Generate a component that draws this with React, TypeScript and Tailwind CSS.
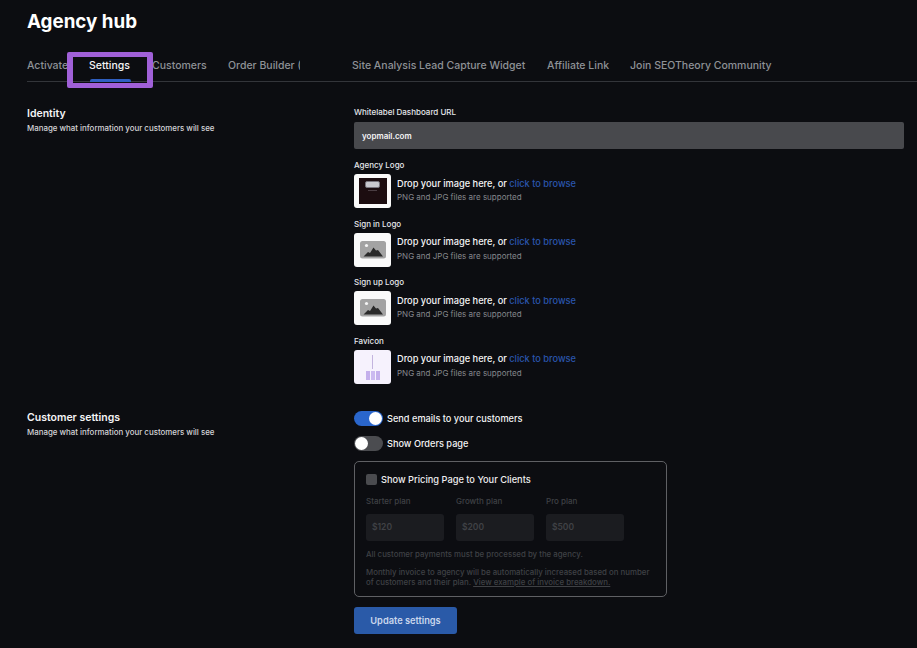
const font = { fontFamily: "Inter, 'Liberation Sans', sans-serif" };

function Placeholder() {
  return (
    <svg viewBox="0 0 37 34" className="w-[37px] h-[34px] block">
      <rect x="6" y="8" width="26" height="17.5" rx="2.5" fill="#a3a3a3" />
      <circle cx="12.5" cy="12.5" r="1.6" fill="#f5f5f5" />
      <path d="M9.5 23.5 L14 19 L16 20 L19.5 14.5 L22 17.5 L24 17 L29 23.5 Z" fill="#2a2a2a" />
    </svg>
  );
}

function AgencyThumb() {
  return (
    <div className="h-full w-full flex items-center justify-center">
      <div className="w-[28px] h-[26px] bg-[#1c0d10] flex flex-col items-center pt-[3px]">
        <div className="w-[15px] h-[7px] rounded-[2px] bg-[#c9c9ce] border border-[#77747c]" />
        <div className="w-[9px] h-[1px] bg-[#4a3d42] mt-[2px]" />
      </div>
    </div>
  );
}

function FaviconThumb() {
  return (
    <div className="h-full w-full bg-[#f6f2fd] flex flex-col items-center pt-[5px]">
      <div className="w-[1px] h-[14px] bg-[#c3b4de] blur-[0.5px]" />
      <div className="flex gap-[1px] mt-[2px] blur-[0.7px]">
        <div className="w-[4px] h-[9px] bg-[#c4b0ec]" />
        <div className="w-[4px] h-[9px] bg-[#cbbaf0]" />
        <div className="w-[4px] h-[9px] bg-[#c4b0ec]" />
      </div>
    </div>
  );
}

function Upload({ label, thumb, mt }: { label: string; thumb: React.ReactNode; mt: string }) {
  return (
    <div className={mt}>
      <div className="text-[8px] leading-[12px] font-medium text-[#e5e7eb]">{label}</div>
      <div className="flex items-start mt-[3px]">
        <div className="w-[37px] h-[34px] bg-[#fafafa] rounded-[3px] overflow-hidden shrink-0">{thumb}</div>
        <div className="ml-[6px] pt-[2.5px]">
          <div className="text-[9.25px] leading-[13px] font-medium text-[#f4f4f5]">
            Drop your image here, or <span className="text-[#2a55ad]">click to browse</span>
          </div>
          <div className="text-[8px] leading-[11px] text-[#85878c] mt-[2.5px]">PNG and JPG files are supported</div>
        </div>
      </div>
    </div>
  );
}

function Plan({ label, value }: { label: string; value: string }) {
  return (
    <div className="w-[78px]">
      <div className="text-[8px] leading-[11px] font-medium text-[#3f4145]">{label}</div>
      <div className="mt-[7px] h-[27px] bg-[#1b1c20] rounded-[3px] pl-[6px] flex items-center text-[8.5px] font-semibold text-[#404246]">{value}</div>
    </div>
  );
}

export default function App() {
  return (
    <div style={font} className="relative w-[917px] h-[648px] overflow-hidden bg-[#0c0d11] text-white">
      <div className="pl-[27px] pt-[10px]">
        <h1 className="text-[18.8px] leading-[24px] font-bold text-white">Agency hub</h1>
        <div className="mt-[19px] h-[29px] border-b border-[#33353a] flex text-[10.5px] leading-[26px] font-medium text-[#8e9196]">
          <div className="w-[62px]">Activate</div>
          <div className="w-[63px] text-[#f5f5f5] relative">
            Settings
            <div className="absolute left-[1px] top-[26px] w-[41px] h-[2.5px] bg-[#2f5fc0] rounded-t-[2px]" />
          </div>
          <div className="w-[76px]">Customers</div>
          <div className="w-[124px]"><span className="block w-[72px] overflow-hidden whitespace-nowrap">Order Builder (Beta)</span></div>
          <div className="w-[195px]">Site Analysis Lead Capture Widget</div>
          <div className="w-[83px]">Affiliate Link</div>
          <div>Join SEOTheory Community</div>
        </div>

        <div className="flex mt-[22px]">
          <div className="w-[327px] shrink-0 pt-[1px]">
            <div className="text-[10.5px] leading-[18px] font-semibold text-[#f4f4f5]">Identity</div>
            <div className="text-[7.9px] leading-[11px] font-medium text-[#d4d4d8]">Manage what information your customers will see</div>
          </div>
          <div className="w-[550px] shrink-0">
            <div className="text-[8px] leading-[11px] font-medium text-[#e5e7eb] mt-[3px]">Whitelabel Dashboard URL</div>
            <div className="mt-[4px] h-[27px] bg-[#48494d] rounded-[2px] pl-[8px] flex items-center text-[8px] font-semibold text-[#f4f4f5]">yopmail.com</div>
            <Upload mt="mt-[10px]" label="Agency Logo" thumb={<AgencyThumb />} />
            <Upload mt="mt-[9.67px]" label="Sign in Logo" thumb={<Placeholder />} />
            <Upload mt="mt-[9.67px]" label="Sign up Logo" thumb={<Placeholder />} />
            <Upload mt="mt-[9.67px]" label="Favicon" thumb={<FaviconThumb />} />
          </div>
        </div>

        <div className="flex mt-[24px]">
          <div className="w-[327px] shrink-0 pt-[1px]">
            <div className="text-[10.5px] leading-[18px] font-semibold text-[#f4f4f5]">Customer settings</div>
            <div className="text-[7.9px] leading-[11px] font-medium text-[#d4d4d8]">Manage what information your customers will see</div>
          </div>
          <div className="w-[550px] shrink-0 pt-[3px]">
            <div className="flex items-center h-[15px]">
              <div className="w-[29px] h-[15px] rounded-full bg-[#2a66cc] flex items-center justify-end pr-[1px]">
                <div className="w-[13px] h-[13px] rounded-full bg-white" />
              </div>
              <span className="ml-[4px] text-[9.2px] font-medium text-[#f4f4f5]">Send emails to your customers</span>
            </div>
            <div className="flex items-center h-[15px] mt-[10px]">
              <div className="w-[29px] h-[15px] rounded-full bg-[#4b4c50] flex items-center pl-[1px]">
                <div className="w-[13px] h-[13px] rounded-full bg-white" />
              </div>
              <span className="ml-[4px] text-[9.2px] font-medium text-[#f4f4f5]">Show Orders page</span>
            </div>
            <div className="mt-[10px] w-[313px] h-[136px] border border-[#5f6064] rounded-[5px] px-[11px] pt-[12px]">
              <div className="flex items-center h-[11px]">
                <div className="w-[11px] h-[11px] rounded-[2px] bg-[#4a4b4f]" />
                <span className="ml-[4px] text-[9.25px] font-medium text-[#ececee]">Show Pricing Page to Your Clients</span>
              </div>
              <div className="flex gap-[12px] mt-[11px]">
                <Plan label="Starter plan" value="$120" />
                <Plan label="Growth plan" value="$200" />
                <Plan label="Pro plan" value="$500" />
              </div>
              <div className="text-[7.85px] leading-[11px] font-medium text-[#3f4145] mt-[8px]">All customer payments must be processed by the agency.</div>
              <div className="text-[7.85px] leading-[10px] font-medium text-[#3f4145] mt-[7px]">
                Monthly invoice to agency will be automatically increased based on number of customers and their plan. <span className="underline">View example of invoice breakdown.</span>
              </div>
            </div>
            <div className="mt-[10px] w-[103px] h-[27px] rounded-[3px] bg-[#2a5aa8] flex items-center justify-center text-[9.25px] font-semibold text-[#c9d6ec]">Update settings</div>
          </div>
        </div>
      </div>

      <div className="absolute left-[67px] top-[52px] w-[86px] h-[36px] border-x-[6px] border-y-[5px] border-[#a060d8] rounded-[2px]" />
    </div>
  );
}
